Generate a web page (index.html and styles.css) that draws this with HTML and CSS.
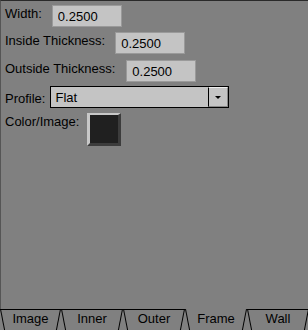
FILE: index.html
```html
<!DOCTYPE html>
<html>
<head>
  <title>Frame Properties</title>
  <link rel="stylesheet" href="styles.css">
</head>
<body>
  <div class="panel">
    <div class="field-row">
      <label class="field-label">Width:</label>
      <input type="text" class="num-input" value="0.2500">
    </div>
    <div class="field-row">
      <label class="field-label">Inside Thickness:</label>
      <input type="text" class="num-input" value="0.2500">
    </div>
    <div class="field-row wide-gap">
      <label class="field-label">Outside Thickness:</label>
      <input type="text" class="num-input" value="0.2500">
    </div>
    <div class="field-row profile-row">
      <label class="field-label">Profile:</label>
      <div class="select-box">
        <span class="select-value">Flat</span>
        <span class="select-button"><span class="arrow"></span></span>
      </div>
    </div>
    <div class="field-row color-row">
      <label class="field-label">Color/Image:</label>
      <div class="swatch"></div>
    </div>
  </div>
  <div class="tabs">
    <div class="tab">Image</div>
    <div class="tab">Inner</div>
    <div class="tab">Outer</div>
    <div class="tab active">Frame</div>
    <div class="tab">Wall</div>
  </div>
</body>
</html>
```

FILE: styles.css
```css
html, body {
  margin: 0;
  padding: 0;
  width: 308px;
  height: 330px;
  overflow: hidden;
}

body {
  background-color: #808080;
  font-family: "Liberation Sans", Arial, sans-serif;
  font-size: 13px;
  line-height: 15px;
  color: #000;
}

.panel {
  height: 304px;
  border-top: 1px solid #2a2a2a;
  border-left: 1px solid #555;
  padding: 4px 0 0 4px;
  display: flex;
  flex-direction: column;
  gap: 5px;
}

.field-row {
  display: flex;
  align-items: flex-start;
  gap: 10px;
}

.field-row.wide-gap {
  gap: 11px;
  margin-top: 1px;
}

.field-label {
  padding-top: 1px;
  white-space: nowrap;
}

.num-input {
  box-sizing: border-box;
  width: 70px;
  height: 22px;
  margin: 0;
  padding: 0 0 0 5px;
  border: 1px solid #9a9a9a;
  background: #c4c4c4;
  font-family: inherit;
  font-size: 13px;
  color: #000;
  outline: none;
}

.profile-row {
  gap: 5px;
  margin-top: -1px;
}

.profile-row .field-label {
  padding-top: 5px;
}

.select-box {
  box-sizing: border-box;
  width: 179px;
  height: 22px;
  border: 1px solid #000;
  background: #c4c4c4;
  display: flex;
  align-items: stretch;
}

.select-value {
  flex: 1;
  padding: 3px 0 0 4px;
}

.select-button {
  box-sizing: border-box;
  width: 20px;
  border-left: 1px solid #000;
  border-top: 1px solid #eee;
  border-right: 1px solid #888;
  border-bottom: 1px solid #888;
  background: #c4c4c4;
  display: flex;
  align-items: center;
  justify-content: center;
}

.arrow {
  width: 0;
  height: 0;
  border-left: 3px solid transparent;
  border-right: 3px solid transparent;
  border-top: 3px solid #000;
}

.color-row {
  gap: 8px;
}

.color-row .field-label {
  padding-top: 1px;
}

.swatch {
  box-sizing: border-box;
  width: 34px;
  height: 33px;
  border-style: solid;
  border-width: 2px 3px 3px 3px;
  border-color: #c8c8c8 #3c3c3c #3c3c3c #c8c8c8;
  background: #202020;
}

.tabs {
  display: flex;
}

.tab {
  position: relative;
  flex: none;
  width: 62px;
  height: 20px;
  border-top: 1px solid #000;
  padding-top: 1px;
  text-align: center;
}

.tab:first-child {
  width: 61px;
}

.tab.active {
  border-top-color: transparent;
}

.tab::before,
.tab::after {
  content: "";
  position: absolute;
  top: -1px;
  width: 1px;
  height: 24px;
  background: #000;
  transform-origin: top center;
}

.tab::before {
  left: 0;
  transform: rotate(-11deg);
}

.tab::after {
  right: 0;
  transform: rotate(11deg);
}
```
